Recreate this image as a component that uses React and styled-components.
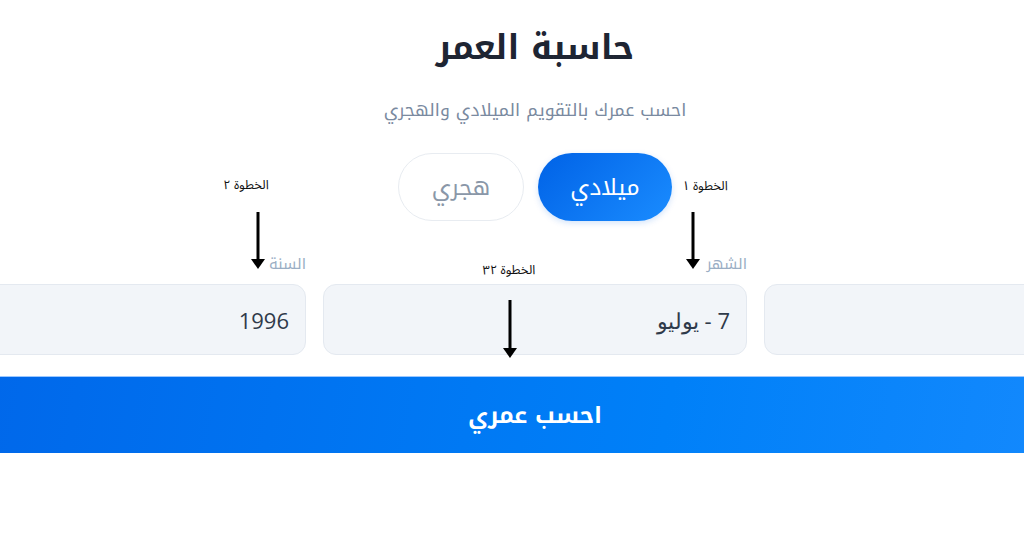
import React, { useState } from 'react'
import styled, { createGlobalStyle } from 'styled-components'

const kufi = `"Noto Kufi Arabic", "Cairo", "Tajawal", "DejaVu Sans", sans-serif`

const GlobalStyle = createGlobalStyle`
  html, body {
    margin: 0;
    padding: 0;
    background: #ffffff;
    overflow: hidden;
  }
  body {
    font-family: ${kufi};
  }
`

const Page = styled.div`
  width: 1024px;
  height: 538px;
  display: flex;
  justify-content: center;
  padding-left: 46px;
  box-sizing: border-box;
  overflow: hidden;
`

const Calculator = styled.div`
  position: relative;
  flex: 0 0 1306px;
  width: 1306px;
  direction: rtl;
  display: flex;
  flex-direction: column;
  align-items: center;
  padding-top: 24px;
`

const Title = styled.h1`
  margin: 0;
  font-family: ${kufi};
  font-size: 34px;
  font-weight: 700;
  color: #1e2533;
  line-height: 48px;
`

const Subtitle = styled.p`
  margin: 26px 0 0;
  font-family: ${kufi};
  font-size: 17.6px;
  color: #7a8aa0;
  line-height: 24px;
`

const Toggle = styled.div`
  display: flex;
  gap: 14px;
  margin-top: 31px;
`

const ToggleButton = styled.button`
  height: 68px;
  min-width: ${p => p.$width}px;
  padding: 0 24px;
  border-radius: 34px;
  font-family: ${kufi};
  font-size: 23px;
  cursor: pointer;
  border: ${p => (p.$active ? 'none' : '1.5px solid #e8ecf1')};
  background: ${p => (p.$active ? 'linear-gradient(135deg, #0062e6 0%, #1a8cff 100%)' : '#ffffff')};
  color: ${p => (p.$active ? '#ffffff' : '#8a97a8')};
  box-shadow: ${p => (p.$active ? '0 2px 6px rgba(0, 102, 230, 0.18)' : 'none')};
`

const Fields = styled.div`
  align-self: stretch;
  display: grid;
  grid-template-columns: repeat(3, 1fr);
  gap: 17px;
  margin-top: 34px;
`

const Field = styled.label`
  display: flex;
  flex-direction: column;
  gap: 11px;
`

const FieldLabel = styled.span`
  font-family: ${kufi};
  font-size: 15px;
  color: #9aaec4;
  line-height: 18px;
  height: 18px;
`

const FieldBox = styled.div`
  height: 71px;
  box-sizing: border-box;
  border: 1.5px solid #e4e9f0;
  border-radius: 13px;
  background: #f2f5f9;
  display: flex;
  align-items: center;
  padding: 0 16px;
  font-family: "Open Sans", "Noto Sans", sans-serif;
  font-size: 22px;
  color: #2f3a4a;
`

const SubmitButton = styled.button`
  align-self: stretch;
  margin-top: 21px;
  height: 77px;
  border: none;
  border-top: 1px solid #9cc8ff;
  background: linear-gradient(100deg, #0064e8 0%, #0080f8 60%, #1a8cff 100%);
  color: #ffffff;
  font-family: ${kufi};
  font-size: 23px;
  font-weight: 700;
  cursor: pointer;
`

// annotation overlays sit on top of the form
const Note = styled.div`
  position: absolute;
  left: ${p => p.$x}px;
  top: ${p => p.$y}px;
  display: flex;
  flex-direction: column;
  align-items: center;
  direction: rtl;
`

const NoteText = styled.span`
  font-family: "Noto Sans Arabic", "Noto Naskh Arabic", "Noto Sans", sans-serif;
  font-size: 12.8px;
  color: #111111;
  white-space: nowrap;
  line-height: 16px;
`

const Arrow = ({ length }) => (
  <svg width="14" height={length} viewBox={`0 0 14 ${length}`}>
    <line x1="7" y1="0" x2="7" y2={length - 8} stroke="#000" strokeWidth="3" />
    <polygon points={`0,${length - 10} 14,${length - 10} 7,${length}`} fill="#000" />
  </svg>
)

const notes = [
  { text: 'الخطوة ١', x: 823, y: 178, arrowX: 811, arrowY: 212, len: 57 },
  { text: 'الخطوة ٢', x: 364, y: 177, arrowX: 376, arrowY: 212, len: 57 },
  { text: 'الخطوة ٣٢', x: 627, y: 262, arrowX: 628, arrowY: 300, len: 58 },
]

const App = () => {
  const [calendar, setCalendar] = useState('gregorian')

  return (
    <>
      <GlobalStyle />
      <Page>
        <Calculator>
          <Title>حاسبة العمر</Title>
          <Subtitle>احسب عمرك بالتقويم الميلادي والهجري</Subtitle>
          <Toggle>
            <ToggleButton
              $active={calendar === 'gregorian'}
              $width={134}
              onClick={() => setCalendar('gregorian')}
            >
              ميلادي
            </ToggleButton>
            <ToggleButton
              $active={calendar === 'hijri'}
              $width={126}
              onClick={() => setCalendar('hijri')}
            >
              هجري
            </ToggleButton>
          </Toggle>
          <Fields>
            <Field>
              <FieldLabel>اليوم</FieldLabel>
              <FieldBox></FieldBox>
            </Field>
            <Field>
              <FieldLabel>الشهر</FieldLabel>
              <FieldBox>7 - يوليو</FieldBox>
            </Field>
            <Field>
              <FieldLabel>السنة</FieldLabel>
              <FieldBox>1996</FieldBox>
            </Field>
          </Fields>
          <SubmitButton>احسب عمري</SubmitButton>

          {notes.map(n => (
            <React.Fragment key={n.text}>
              <Note $x={n.x} $y={n.y} style={{ transform: 'translateX(-50%)' }}>
                <NoteText>{n.text}</NoteText>
              </Note>
              <Note $x={n.arrowX} $y={n.arrowY} style={{ transform: 'translateX(-50%)' }}>
                <Arrow length={n.len} />
              </Note>
            </React.Fragment>
          ))}
        </Calculator>
      </Page>
    </>
  )
}

export default App
